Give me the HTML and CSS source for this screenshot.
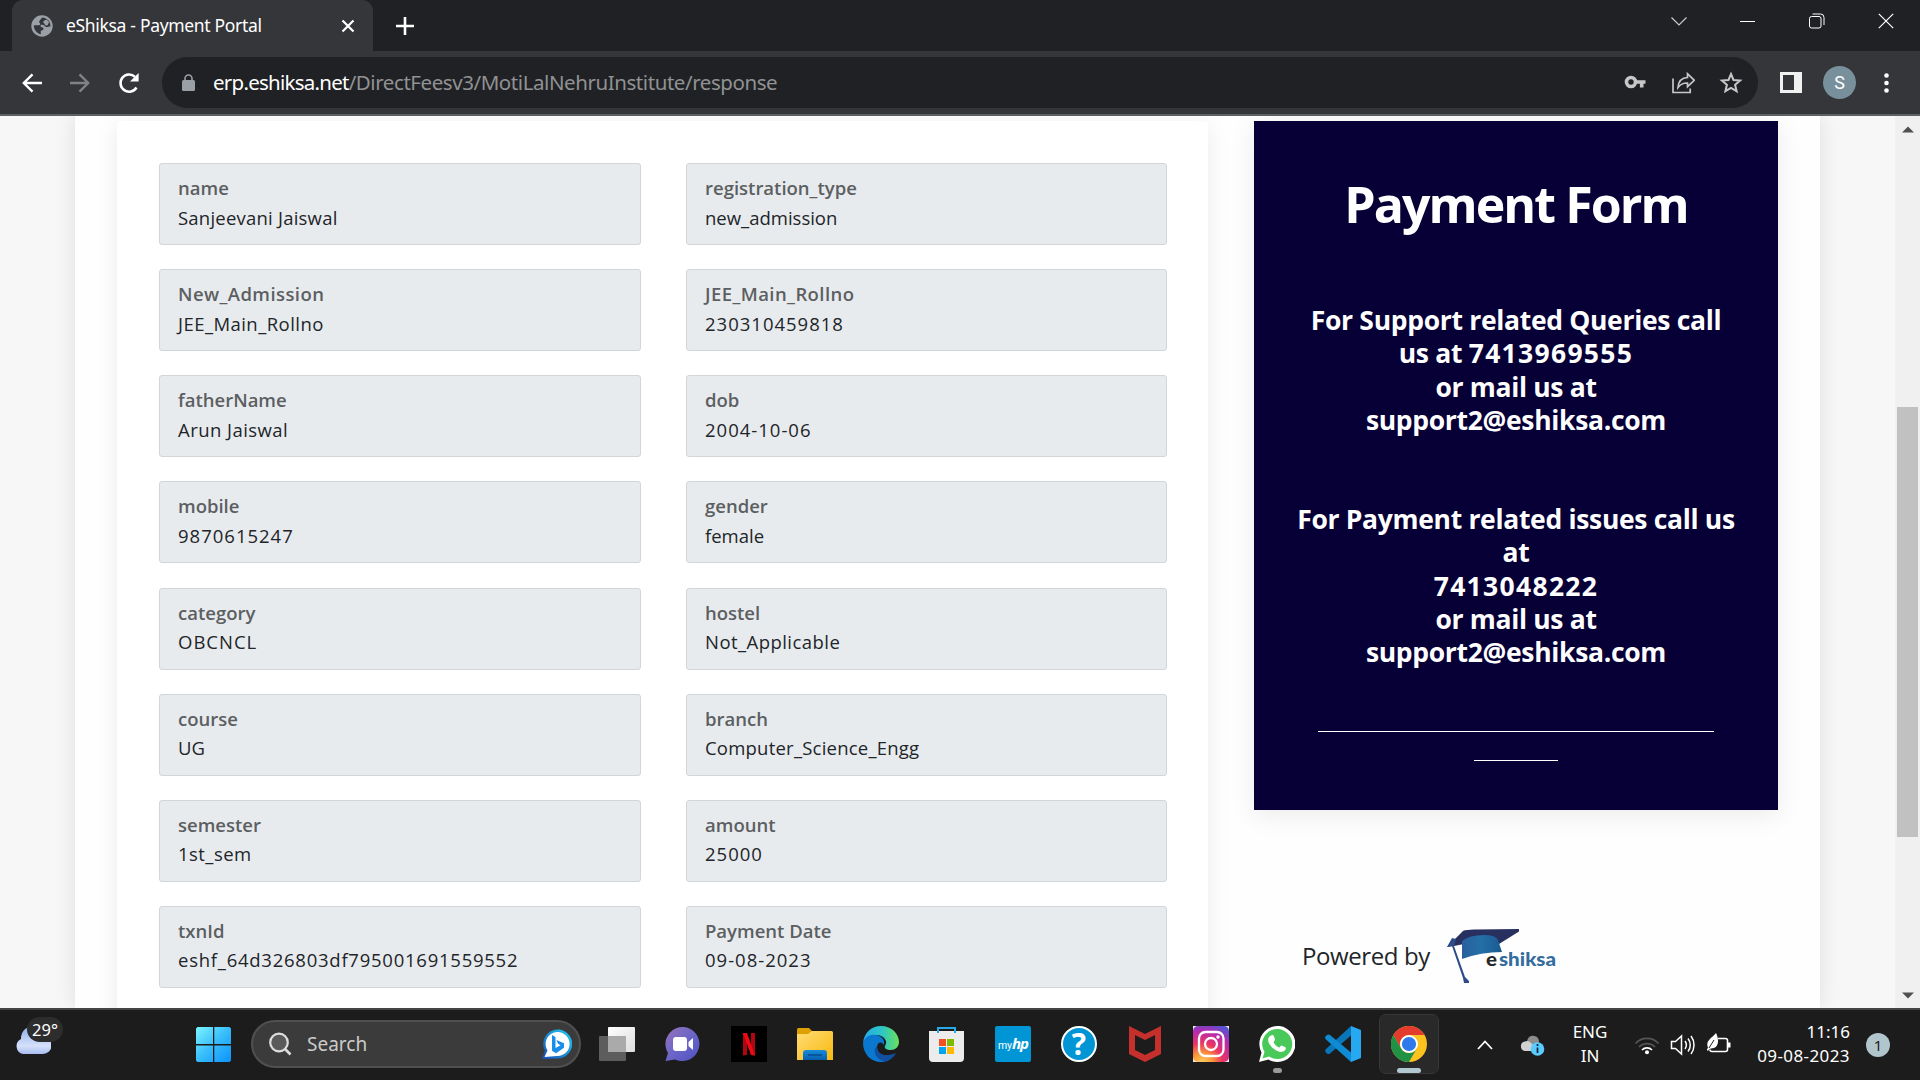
FILE: index.html
```html
<!DOCTYPE html>
<html lang="en">
<head>
<meta charset="utf-8">
<title>eShiksa - Payment Portal</title>
<link rel="stylesheet" href="styles.css">
</head>
<body>
<div class="screen">
  <header class="tabstrip">
    <div class="tab">
      <svg class="globe" width="22" height="22" viewBox="0 0 22 22"><circle cx="11" cy="11" r="10.7" fill="#9aa0a6"/><path d="M12.5 2.6C9.5 3 9.8 5 8.4 6.2 7 7.4 9.8 7.800 9.200 9.600c-.5 1.200-3.200.4-6.500.9C3 14.500 5.500 18 9.600 19.300c1-.5-.5-2.200.3-3.200.8-1 2.700-.7 2.600-2.600-.1-1.500-2.900-1-3-2.500-.1-1.300 1.400-1.300 2.800-1.100 1.800.2 1.500 2.200 3.300 2.200 1.500 0 2.300-.6 3.800-.5.4-4.200-2-7.300-6.900-9z" fill="#35363a"/><path d="M12.200 7.200c.3-2 2.500-1.400 3.600-2.600l2.400 3c-1.500 1.200-.8 3-2.600 3-1.500 0-1.600-1.500-3.400-3.400z" fill="#9aa0a6"/></svg>
      <span class="tab-title">eShiksa - Payment Portal</span>
      <svg class="tab-close" width="14" height="14" viewBox="0 0 14 14"><path d="M1.500 1.500l11 11M12.500 1.500l-11 11" stroke="#fff" stroke-width="2.200"/></svg>
    </div>
    <svg class="newtab" width="18" height="18" viewBox="0 0 18 18"><path d="M9 0v18M0 9h18" stroke="#fff" stroke-width="2.600"/></svg>
    <div class="winctl">
      <svg width="16" height="16" viewBox="0 0 16 16"><path d="M.5 4.500L8 12l7.500-7.500" fill="none" stroke="#ccc" stroke-width="1.200"/></svg>
      <svg width="16" height="16" viewBox="0 0 16 16"><path d="M0 8.500h15" stroke="#fff"/></svg>
      <svg width="16" height="16" viewBox="0 0 16 16"><rect x=".5" y="3.500" width="11.500" height="11.500" rx="2" fill="none" stroke="#fff"/><path d="M3.500 1h8a3.500 3.500 0 0 1 3.500 3.500v7.500" fill="none" stroke="#fff"/></svg>
      <svg width="16" height="16" viewBox="0 0 16 16"><path d="M.8.8l14.400 14.400M15.200.8L.8 15.200" stroke="#fff" stroke-width="1.200"/></svg>
    </div>
  </header>
  <div class="toolbar">
    <div class="nav">
      <svg width="20" height="20" viewBox="0 0 20 20"><path d="M20 10H2M10.500 1.300L1.800 10l8.700 8.700" fill="none" stroke="#fff" stroke-width="2.400"/></svg>
      <svg width="20" height="20" viewBox="0 0 20 20"><path d="M0 10h18M9.500 1.300l8.700 8.700-8.700 8.700" fill="none" stroke="#818285" stroke-width="2.400"/></svg>
      <svg width="22" height="22" viewBox="0 0 22 22"><path d="M18.500 15.500A8.600 8.600 0 1 1 17 4.800" fill="none" stroke="#fff" stroke-width="2.500"/><path d="M20.600 1v8.600H12z" fill="#fff"/></svg>
    </div>
    <div class="omnibox">
      <svg class="lock" width="13" height="18" viewBox="0 0 13 18"><rect y="6" width="13" height="11" rx="1.500" fill="#9aa0a6"/><path d="M3 7V4.500a3.500 3.500 0 0 1 7 0V7" fill="none" stroke="#9aa0a6" stroke-width="1.600"/></svg>
      <span class="url"><span class="host">erp.eshiksa.net</span><span class="path">/DirectFeesv3/MotiLalNehruInstitute/response</span></span>
      <div class="omni-icons">
        <svg width="24" height="24" viewBox="0 0 24 24"><circle cx="8" cy="12" r="4.500" fill="none" stroke="#c7c7c7" stroke-width="3.600"/><path d="M12 12h10.500M18.700 12v5.500" stroke="#c7c7c7" stroke-width="3.600"/></svg>
        <svg width="24" height="24" viewBox="0 0 24 24"><path d="M2 8.500v14h17.200v-4" fill="none" stroke="#c7c7c7" stroke-width="1.700"/><path d="M7 17.500c.5-6.500 4-9.800 9.500-10V3.700l6.800 6.600-6.800 6.400V13c-4-.2-7 1.200-9.500 4.500z" fill="none" stroke="#c7c7c7" stroke-width="1.700"/></svg>
        <svg width="24" height="24" viewBox="0 0 24 24"><path d="M12 4l2.500 6 6.600.5-5 4.300 1.500 6.400-5.600-3.400-5.600 3.400 1.500-6.400-5-4.300 6.600-.5z" fill="none" stroke="#c7c7c7" stroke-width="2"/></svg>
      </div>
    </div>
    <svg class="panel-icon" width="22" height="21" viewBox="0 0 22 21"><rect width="22" height="21" fill="#f1f1f2"/><rect x="3" y="3" width="11" height="15" fill="#35363a"/></svg>
    <span class="avatar">S</span>
    <svg class="dots" width="5" height="20" viewBox="0 0 5 20"><g fill="#fff"><circle cx="2.500" cy="2.500" r="2.300"/><circle cx="2.500" cy="10" r="2.300"/><circle cx="2.500" cy="17.500" r="2.300"/></g></svg>
  </div>

  <div class="viewport">
    <main class="page">
      <section class="card">
        <div class="field"><b>name</b><span>Sanjeevani Jaiswal</span></div>
        <div class="field"><b>registration_type</b><span class="plain">new_admission</span></div>
        <div class="field"><b class="caps">New_Admission</b><span class="caps">JEE_Main_Rollno</span></div>
        <div class="field"><b class="caps">JEE_Main_Rollno</b><span class="num">230310459818</span></div>
        <div class="field"><b>fatherName</b><span class="caps">Arun Jaiswal</span></div>
        <div class="field"><b>dob</b><span class="num">2004-10-06</span></div>
        <div class="field"><b>mobile</b><span class="num">9870615247</span></div>
        <div class="field"><b>gender</b><span class="plain">female</span></div>
        <div class="field"><b>category</b><span class="num">OBCNCL</span></div>
        <div class="field"><b>hostel</b><span class="caps">Not_Applicable</span></div>
        <div class="field"><b>course</b><span class="plain">UG</span></div>
        <div class="field"><b>branch</b><span>Computer_Science_Engg</span></div>
        <div class="field"><b>semester</b><span class="caps">1st_sem</span></div>
        <div class="field"><b>amount</b><span class="num">25000</span></div>
        <div class="field"><b>txnId</b><span class="mixed">eshf_64d326803df795001691559552</span></div>
        <div class="field"><b>Payment Date</b><span class="num">09-08-2023</span></div>
      </section>
      <aside class="side">
        <div class="panel">
          <h1>Payment Form</h1>
          <p class="support">For Support related Queries call<br>us at <span class="phone">7413969555</span><br>or mail us at<br>support2@eshiksa.com</p>
          <p class="support payment">For Payment related issues call us<br>at<br><span class="phone">7413048222</span><br>or mail us at<br>support2@eshiksa.com</p>
          <div class="rule"></div>
          <div class="rule short"></div>
        </div>
        <div class="powered">
          <span>Powered by</span>
          <svg width="112" height="54" viewBox="0 0 112 54">
            <defs><linearGradient id="cap" x1="0" x2="1"><stop offset="0" stop-color="#2a5f9c"/><stop offset=".45" stop-color="#246fa8"/><stop offset="1" stop-color="#1b5a91"/></linearGradient></defs>
            <path d="M1 18L17 2Q20 .5 28 .5L73 0v2.500L53 15 39 10 18 15 8 17z" fill="#28305f"/>
            <path d="M16 12Q23 6 38 6 50 6 52 11L56 23Q35 23 16 30z" fill="url(#cap)"/>
            <path d="M1 18L6 9l4 1-2 7 11 31 4 4v2l-5 0-1-5L6 17z" fill="#2c4c89"/>
            <text class="logo-e" x="40" y="37" textLength="11" lengthAdjust="spacingAndGlyphs">e</text>
            <text class="logo-s" x="53" y="37" textLength="57" lengthAdjust="spacingAndGlyphs">shiksa</text>
          </svg>
        </div>
      </aside>
    </main>
    <div class="scrollbar">
      <svg width="14" height="7" viewBox="0 0 14 7"><path d="M1 6.500L7 .5l6 6z" fill="#505050"/></svg>
      <div class="thumb"></div>
      <svg width="14" height="7" viewBox="0 0 14 7"><path d="M1 .5l6 6 6-6z" fill="#505050"/></svg>
    </div>
  </div>

  <footer class="taskbar">
    <div class="weather">
      <svg width="36" height="32" viewBox="0 0 36 32"><defs><linearGradient id="cl" x2="0" y2="1"><stop offset="0" stop-color="#8fb0ee"/><stop offset=".7" stop-color="#d5e0fa"/><stop offset="1" stop-color="#a9bdf0"/></linearGradient></defs><path d="M8 31a8 8 0 0 1-2-15C6 9 10 4 16 4s10 5 12 10a8.500 8.500 0 0 1 0 17z" fill="url(#cl)"/></svg>
      <span class="temp">29°</span>
    </div>
    <svg class="start" width="36" height="36" viewBox="0 0 36 36"><defs><linearGradient id="wi" x2="1" y2="1"><stop offset="0" stop-color="#7cf5ff"/><stop offset=".5" stop-color="#38bdfb"/><stop offset="1" stop-color="#0b92fb"/></linearGradient></defs><path d="M1.500 0H17v17H0V1.500zM18.300 0H33.500L35 1.500V17H18.300zM0 18.500h17V35H1.500L0 33.500zM18.300 18.500H35v15L33.500 35H18.300z" fill="url(#wi)"/></svg>
    <div class="search">
      <svg width="24" height="24" viewBox="0 0 24 24"><circle cx="11" cy="10.500" r="8.800" fill="#5a5a5a" stroke="#ddd" stroke-width="2.200"/><path d="M17 17l5.500 5.500" stroke="#ddd" stroke-width="2.600"/></svg>
      <span>Search</span>
      <svg class="bing" width="30" height="30" viewBox="0 0 30 30"><defs><linearGradient id="bi" x1="1" x2="0" y2="1"><stop offset="0" stop-color="#22cdf0"/><stop offset="1" stop-color="#174dbb"/></linearGradient></defs><path d="M0 30l3-8A14.500 14.500 0 1 1 15 29.500z" fill="url(#bi)"/><path d="M2.500 28l3-6.500A12 12 0 1 1 15 27z" fill="#fff"/><path d="M10 6l3.500 2v11l5-2.800-2.500-1.400-1.500-3.800 7.500 3.300v4.500l-8 5.500-4-2.500z" fill="#198de9"/></svg>
    </div>
    <div class="apps">
      <div class="app"><svg width="36" height="36" viewBox="0 0 36 36"><defs><linearGradient id="tv" x2="1" y2="1"><stop offset="0" stop-color="#fff"/><stop offset="1" stop-color="#ddd"/></linearGradient></defs><rect x="9" y="1" width="27" height="25" rx="1" fill="url(#tv)"/><rect y="10" width="27" height="25" rx="1" fill="#5d5d5d"/><rect x="9" y="10" width="18" height="16" fill="#aaa"/></svg></div>
      <div class="app"><svg width="36" height="36" viewBox="0 0 36 36"><defs><linearGradient id="ch" x2="1" y2="1"><stop offset="0" stop-color="#9873b8"/><stop offset=".5" stop-color="#6b66c7"/><stop offset="1" stop-color="#4f50c4"/></linearGradient></defs><path d="M.5 35L3 27A17 17 0 1 1 18 35c-3 0-5-.5-8-1.500z" fill="url(#ch)"/><rect x="8" y="11" width="14" height="14" rx="3" fill="#fff"/><path d="M23.500 16l4.500-4v12l-4.500-4z" fill="#fff"/></svg></div>
      <div class="app"><svg width="36" height="36" viewBox="0 0 36 36"><rect width="36" height="36" fill="#000"/><path d="M12 7h4v22l-4 .5zM20 7h4v22.500l-4-.5z" fill="#b1060f"/><path d="M12 7h4l8 22.500-4-.5z" fill="#ec0a17"/></svg></div>
      <div class="app"><svg width="36" height="36" viewBox="0 0 36 36"><defs><linearGradient id="fo" x2="1" y2="1"><stop offset="0" stop-color="#ffdd75"/><stop offset="1" stop-color="#f8b80e"/></linearGradient><linearGradient id="fb" x2="0" y2="1"><stop offset="0" stop-color="#178bdb"/><stop offset="1" stop-color="#075fae"/></linearGradient></defs><path d="M0 10V3.500Q0 2 1.500 2H12l3 3v5z" fill="#dda000"/><path d="M0 8h11l4-3h19.500Q36 5 36 6.500V34H0z" fill="url(#fo)"/><path d="M6 34v-7q0-3 3-3h18q3 0 3 3v7z" fill="url(#fb)"/><path d="M11 29h14" stroke="#064b8c" stroke-width="1.500"/></svg></div>
      <div class="app"><svg width="36" height="36" viewBox="0 0 36 36"><defs><linearGradient id="ea" x1="0" x2="1"><stop offset="0" stop-color="#26a9e7"/><stop offset=".55" stop-color="#2dc7c3"/><stop offset="1" stop-color="#6ce05a"/></linearGradient></defs><path d="M0 17C1 7 8 0 18 0c11 0 18 8 18 16 0 5-4 8-8 8-5 0-7-2-6-4 4-6-3-12-10-11C6 9.500 1 13 0 17z" fill="url(#ea)"/><path d="M0 17C2 10 8 8 13 9c6 1 9 5 8 10-3-5-7-2-7 2 0 7 8 11 18 7-4 6-9 8-14 8C8 36 0 28 0 17z" fill="#0b78d0"/><path d="M14 20c-1 8 7 12 19 7-3 5-6 7-10 8.500C15 35 8 26 14 20z" fill="#1150a0"/></svg></div>
      <div class="app"><svg width="36" height="36" viewBox="0 0 36 36"><path d="M0 5h35v27q0 4-4 4H4q-4 0-4-4z" fill="#ececec"/><path d="M9 7V2h17v5" fill="none" stroke="#27a8e8" stroke-width="2"/><path d="M10 13h7v7h-7z" fill="#f25022"/><path d="M18 13h7v7h-7z" fill="#7fba00"/><path d="M10 21h7v7h-7z" fill="#00a4ef"/><path d="M18 21h7v7h-7z" fill="#ffb900"/></svg></div>
      <div class="app"><span class="myhp">my<b>hp</b></span></div>
      <div class="app"><span class="help">?</span></div>
      <div class="app"><svg width="36" height="36" viewBox="0 0 36 36"><path d="M2 0l16 8L34 0v28l-16 8-16-8z" fill="#c5302c"/><path d="M8 9l10 5 10-5v15l-10 5-10-5z" fill="#1c1c1c"/></svg></div>
      <div class="app"><svg width="36" height="36" viewBox="0 0 36 36"><defs><radialGradient id="ig" cx=".25" cy="1.050" r="1.150"><stop offset="0" stop-color="#ffd468"/><stop offset=".25" stop-color="#fb9a38"/><stop offset=".5" stop-color="#ec3464"/><stop offset=".8" stop-color="#b42bb0"/><stop offset="1" stop-color="#5a52d2"/></radialGradient></defs><rect width="36" height="36" fill="#eee"/><rect width="36" height="36" rx="5" fill="url(#ig)"/><g fill="none" stroke="#fff" stroke-width="2.300"><rect x="6" y="6" width="24.500" height="24" rx="6.500"/><circle cx="18" cy="18" r="6"/></g><circle cx="25" cy="11" r="1.700" fill="#fff"/></svg></div>
      <div class="app running"><svg width="36" height="36" viewBox="0 0 36 36"><path d="M0 36l2.500-9.500A18 18 0 1 1 18 36c-3 0-6-1-8.500-2.500z" fill="#fff"/><path d="M3.500 32.500l2-6.500A15 15 0 1 1 18 33c-3 0-5.500-1-8-2.500z" fill="#49c95a"/><path d="M12 9.500c1.500-1 2.500-.5 3 1l1 3c.2 1-1.500 2-1.500 2.500 1 2.500 3 4.500 5.500 5.500 1 .2 1.500-2 2.500-2l3.500 1.500c1.500.8.8 2.500-.3 3.500-2.500 2.500-6.500 1.500-10-1C11.500 20.500 8 16 9.500 12c.5-1 1.200-2 2.500-2.500z" fill="#fff"/></svg><i></i></div>
      <div class="app"><svg width="36" height="36" viewBox="0 0 36 36"><path d="M26 0v9.500L5 27.500q-1.500 1-3 0l-1.500-1.500q-1-1.500.5-3z" fill="#0876b9"/><path d="M26 36v-9.500L5 9q-1.500-1-3 0L.5 10.500q-1 1.500.5 3z" fill="#0f8bd3"/><path d="M26 0l10 4v28l-10 4z" fill="#27a9f1"/></svg></div>
      <div class="app active"><svg width="36" height="36" viewBox="0 0 36 36"><circle cx="18" cy="18" r="18" fill="#fcc31e"/><path d="M2.400 9A18 18 0 0 1 33.600 9H18a9 9 0 0 0-7.800 13.500z" fill="#e33b2e"/><path d="M2.400 9A18 18 0 0 0 18 36l7.800-13.500A9 9 0 0 1 10.200 22.500z" fill="#219145"/><circle cx="18" cy="18" r="9" fill="#fff"/><circle cx="18" cy="18" r="7.100" fill="#3079ed"/></svg><i></i></div>
    </div>
    <div class="tray">
      <svg class="chev" width="16" height="10" viewBox="0 0 16 10"><path d="M1 9l7-7.500L15 9" fill="none" stroke="#fff" stroke-width="1.800"/></svg>
      <svg class="drive" width="26" height="22" viewBox="0 0 26 22"><path d="M7 9C7 4 10 1 14 2c3 0 5 3 5 5l-2 10H6z" fill="#8d8d8d"/><path d="M5 17a4.800 4.800 0 0 1 0-9.500Q9 6 12 10l6 7z" fill="#d2d2d2"/><circle cx="17.500" cy="15" r="6.800" fill="#5acbff"/><path d="M17.500 13.500v5.500M17.500 10v2" stroke="#123" stroke-width="1.700"/></svg>
      <span class="lang">ENG<br>IN</span>
      <svg class="wifi" width="26" height="20" viewBox="0 0 26 20"><g fill="none" stroke-width="1.700"><path d="M1.500 8.500a15.500 15.500 0 0 1 23 0M5 12a11 11 0 0 1 16 0" stroke="#555"/><path d="M8 15a7 7 0 0 1 10 0" stroke="#fff"/></g><circle cx="13" cy="17.300" r="2" fill="#fff"/></svg>
      <svg class="sound" width="26" height="22" viewBox="0 0 26 22"><g fill="none" stroke="#fff" stroke-width="1.500"><path d="M1.500 7.500h4L11.500 2v18l-6-5.500h-4z"/><path d="M15 7a7 7 0 0 1 0 8M18 4.500a10.500 10.500 0 0 1 0 13M21 2a15 15 0 0 1 0 18"/></g></svg>
      <svg class="battery" width="26" height="22" viewBox="0 0 26 22"><path d="M12 5.500h7.500q2 0 2 2v9q0 2-2 2H6q-2 0-2-2" fill="none" stroke="#fff" stroke-width="1.600"/><path d="M22 9.500h2.500v5H22z" fill="#fff"/><path d="M10 0c3 6 3 13-2 15-2 .8-4 0-5 1.500L2 18 .8 17 2 14.500C-1 8 6 5 10 0z" fill="#fff"/><path d="M3 15l5-8" stroke="#1c1c1c"/></svg>
      <span class="clock"><span>11:16</span><br>09-08-2023</span>
      <span class="count">1</span>
    </div>
  </footer>
</div>
</body>
</html>
```
FILE: styles.css
```css
* { box-sizing: border-box; }
body { margin: 0; font-family: "Open Sans", sans-serif; }
svg { display: block; flex: none; }
.screen { width: 1920px; height: 1080px; display: flex; flex-direction: column; overflow: hidden; }

/* browser chrome */
.tabstrip { height: 51px; flex: none; background: #202124; display: flex; align-items: flex-start; padding-left: 12px; }
.tab { width: 361px; height: 51px; background: #35363a; border-radius: 11px 11px 0 0; display: flex; align-items: center; padding: 0 18px 0 19px; }
.tab-title { font-family: "Noto Sans", sans-serif; font-size: 17.500px; color: #fff; margin-left: 13px; letter-spacing: -.32px; white-space: nowrap; padding-bottom: 1px; }
.tab-close { margin-left: auto; }
.newtab { margin: 17px 0 0 23px; }
.winctl { margin: 13px 26px 0 auto; display: flex; gap: 53px; }
.toolbar { height: 65px; flex: none; background: #35363a; border-bottom: 2px solid #5f6063; display: flex; align-items: center; }
.nav { width: 162px; display: flex; align-items: center; gap: 28px; padding-left: 22px; }
.omnibox { width: 1596px; height: 51px; border-radius: 26px; background: #202124; display: flex; align-items: center; padding: 0 15px 0 20px; }
.url { margin-left: 18px; font-family: "Noto Sans", sans-serif; font-size: 20.500px; letter-spacing: -.43px; color: #909294; white-space: nowrap; padding-bottom: 2px; }
.host { color: #fff; letter-spacing: -.75px; }
.omni-icons { margin: 0 0 2px auto; display: flex; gap: 24px; }
.panel-icon { margin-left: 22px; }
.avatar { width: 33px; height: 33px; margin-left: 21px; border-radius: 50%; background: #78909c; color: #fff; font: 18px/33px Roboto, sans-serif; text-align: center; }
.dots { margin-left: 28px; }

/* page */
.viewport { height: 892px; flex: none; display: flex; background: #f7f7f7; overflow: hidden; padding-left: 75px; }
.page { width: 1745px; background: #fefefe; box-shadow: 0 0 20px rgba(0,0,0,.1); display: flex; padding: 5px 42px 0; }
.card { width: 1091px; height: 1000px; background: #fff; border-radius: 4px; box-shadow: 0 5px 25px rgba(0,0,0,.08); padding: 42px 41px 0 42px; display: grid; grid-template-columns: 482px 481px; column-gap: 45px; grid-auto-rows: 106.140px; }
.field { height: 82px; background: #e8ebee; border: 1px solid #d3d6d9; border-radius: 3px; padding: 9px 18px; display: flex; flex-direction: column; font-size: 18.500px; line-height: 29.500px; color: #212529; white-space: nowrap; }
.field b { font-weight: 600; color: #5c5f62; }
.field b.caps { letter-spacing: .42px; }
.field span { letter-spacing: .22px; }
.field .plain { letter-spacing: 0; }
.field .caps { letter-spacing: .45px; }
.field .num { letter-spacing: 1px; }
.field .mixed { letter-spacing: .75px; }
.side { margin-left: 46px; width: 524px; }
.panel { height: 689px; background: #070037; box-shadow: 0 5px 25px rgba(0,0,0,.08); color: #fff; text-align: center; padding-top: 50px; display: flex; flex-direction: column; align-items: center; }
.panel h1 { margin: 0; font-size: 50px; line-height: 66px; font-weight: 700; letter-spacing: -1.900px; }
.support { margin: 67px 0 0; font-size: 26.500px; line-height: 33.300px; font-weight: 700; letter-spacing: -.32px; white-space: nowrap; }
.phone { letter-spacing: 1.300px; }
.payment { margin-top: 66px; }
.rule { width: 396px; height: 1px; background: #fff; margin-top: 61px; }
.rule.short { width: 84px; margin-top: 28px; }
.powered { display: flex; align-items: flex-start; margin: 119px 0 0 48px; font-size: 24px; color: #212529; line-height: 54px; }
.powered span { width: 144px; white-space: nowrap; letter-spacing: -.4px; }
.logo-e { font: 900 19px Lato, sans-serif; fill: #282828; }
.logo-s { font: 900 19px Lato, sans-serif; fill: #356c9e; }
.scrollbar { margin-left: auto; width: 25px; background: #f0f0f0; display: flex; flex-direction: column; align-items: center; padding: 10px 0 9px; }
.thumb { width: 21px; height: 430px; background: #c1c1c1; margin: 274px 0 auto; flex: none; }

/* taskbar */
.taskbar { height: 72px; flex: none; background: #1c1c1c; border-top: 2px solid #444; display: flex; align-items: flex-start; color: #fff; }
.weather { width: 181px; height: 70px; padding: 13px 0 0 15px; position: relative; }
.temp { position: absolute; left: 27px; top: 7px; width: 36px; height: 25px; border-radius: 13px; background: #2d2d2d; font: 16.500px/25px "Noto Sans", sans-serif; text-align: center; }
.start { margin: 17px 0 0 15px; }
.search { width: 330px; height: 48px; margin: 10px 0 0 19px; border-radius: 24px; background: #3b3b3b; border: 2px solid #505050; display: flex; align-items: center; padding: 0 7px 0 15px; font: 19px "Noto Sans", sans-serif; color: #ccc; }
.search span { margin-left: 15px; letter-spacing: 0; }
.bing { margin-left: auto; }
.apps { margin-left: 3px; display: flex; }
.app { width: 66px; height: 70px; padding: 16px 15px 0; position: relative; }
.app i { position: absolute; left: 29px; bottom: 7px; width: 9px; height: 5px; border-radius: 3px; background: #999; }
.app.active { width: 60px; height: 60px; margin: 4px 3px 0; padding: 11px; border: 1px solid #373737; border-radius: 7px; background: #292929; }
.app.active i { left: 17px; bottom: 0; width: 24px; background: #b1c8d0; }
.myhp { display: block; width: 36px; height: 36px; border-radius: 2px; background: #0096d6; font: 10.500px/35px Roboto, sans-serif; text-align: center; letter-spacing: -.2px; }
.myhp b { font: italic 700 15px/35px "Open Sans", sans-serif; letter-spacing: -1px; }
.help { display: block; width: 36px; height: 36px; border-radius: 50%; border: 2px solid #fff; background: #0096d6; font: 700 30px/32px "Open Sans", sans-serif; text-align: center; }
.tray { display: flex; align-items: center; height: 70px; margin-left: 35px; }
.drive { margin-left: 27px; }
.lang { width: 52px; margin-left: 18px; text-align: center; }
.lang, .clock { font: 17px/24px "Noto Sans", sans-serif; margin-top: -2px; }
.wifi { margin-left: 18px; }
.sound { margin-left: 10px; }
.battery { margin-left: 10px; margin-top: -3px; }
.clock { width: 118px; text-align: right; letter-spacing: .4px; white-space: nowrap; }
.clock span { letter-spacing: 0; }
.count { width: 24px; height: 24px; margin-left: 16px; border-radius: 50%; background: #b1c5cc; color: #1c1c1c; font: 15px/24px "Noto Sans", sans-serif; text-align: center; }
```
